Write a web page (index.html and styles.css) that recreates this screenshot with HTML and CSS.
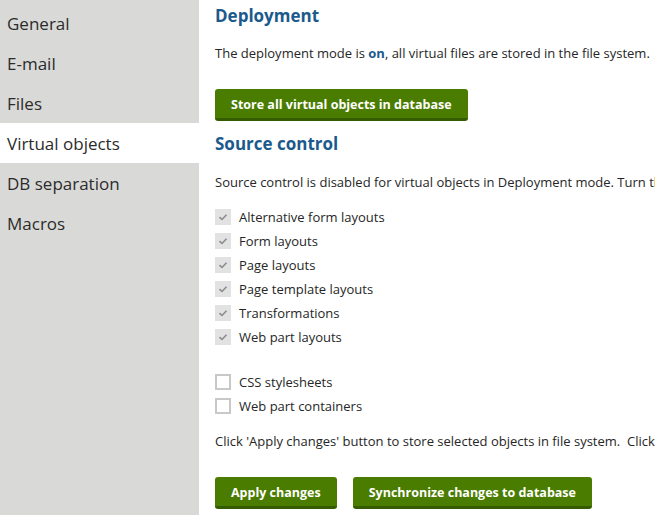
FILE: index.html
```html
<!DOCTYPE html>
<html>
<head>
<meta charset="utf-8">
<link rel="stylesheet" href="styles.css">
</head>
<body>
<div class="layout">
  <nav class="sidebar">
    <div class="nav-item">General</div>
    <div class="nav-item">E-mail</div>
    <div class="nav-item">Files</div>
    <div class="nav-item active">Virtual objects</div>
    <div class="nav-item">DB separation</div>
    <div class="nav-item">Macros</div>
  </nav>
  <main class="content">
    <h2 class="heading">Deployment</h2>
    <p class="text">The deployment mode is <b class="on">on</b>, all virtual files are stored in the file system.</p>
    <div class="btn-row first"><button class="btn">Store all virtual objects in database</button></div>
    <h2 class="heading second">Source control</h2>
    <p class="text">Source control is disabled for virtual objects in Deployment mode. Turn the deployment mode off to enable source control.</p>
    <ul class="checks">
      <li><span class="cb checked"><svg viewBox="0 0 16 16" width="16" height="16"><path d="M4.5 8.2 L7 10.5 L11.5 5.8" fill="none" stroke="#8a8a8a" stroke-width="1.6"/></svg></span>Alternative form layouts</li>
      <li><span class="cb checked"><svg viewBox="0 0 16 16" width="16" height="16"><path d="M4.5 8.2 L7 10.5 L11.5 5.8" fill="none" stroke="#8a8a8a" stroke-width="1.6"/></svg></span>Form layouts</li>
      <li><span class="cb checked"><svg viewBox="0 0 16 16" width="16" height="16"><path d="M4.5 8.2 L7 10.5 L11.5 5.8" fill="none" stroke="#8a8a8a" stroke-width="1.6"/></svg></span>Page layouts</li>
      <li><span class="cb checked"><svg viewBox="0 0 16 16" width="16" height="16"><path d="M4.5 8.2 L7 10.5 L11.5 5.8" fill="none" stroke="#8a8a8a" stroke-width="1.6"/></svg></span>Page template layouts</li>
      <li><span class="cb checked"><svg viewBox="0 0 16 16" width="16" height="16"><path d="M4.5 8.2 L7 10.5 L11.5 5.8" fill="none" stroke="#8a8a8a" stroke-width="1.6"/></svg></span>Transformations</li>
      <li><span class="cb checked"><svg viewBox="0 0 16 16" width="16" height="16"><path d="M4.5 8.2 L7 10.5 L11.5 5.8" fill="none" stroke="#8a8a8a" stroke-width="1.6"/></svg></span>Web part layouts</li>
    </ul>
    <ul class="checks second-group">
      <li><span class="cb"></span>CSS stylesheets</li>
      <li><span class="cb"></span>Web part containers</li>
    </ul>
    <p class="text note">Click 'Apply changes' button to store selected objects in file system.&nbsp; Click 'Synchronize changes to database' button to store changes in database.</p>
    <div class="btn-row last">
      <button class="btn">Apply changes</button>
      <button class="btn">Synchronize changes to database</button>
    </div>
  </main>
</div>
</body>
</html>
```
FILE: styles.css
```css
html, body {
  margin: 0;
  padding: 0;
  background: #fff;
  overflow: hidden;
}
body {
  font-family: "Open Sans", "Noto Sans", sans-serif;
  color: #262626;
  width: 655px;
  height: 515px;
}
.layout {
  display: flex;
  height: 515px;
}
.sidebar {
  width: 199px;
  flex: none;
  background: #d9dad8;
  padding-top: 3px;
}
.nav-item {
  height: 40px;
  line-height: 42px;
  overflow: hidden;
  padding-left: 7px;
  font-size: 17px;
  color: #2b2b2b;
  white-space: nowrap;
}
.nav-item.active {
  background: #fff;
}
.content {
  flex: 1;
  padding-left: 16px;
  white-space: nowrap;
  overflow: hidden;
}
.heading {
  margin: 0;
  font-size: 17px;
  font-weight: 700;
  color: #1b5a8c;
  height: 32px;
  line-height: 32px;
}
.heading.second {
  margin-top: 7px;
}
.text {
  margin: 12px 0 0 0;
  font-size: 13px;
  line-height: 18px;
  color: #262626;
}
.heading.second + .text {
  margin-top: 13px;
}
.text.note {
  margin-top: 14px;
}
.on {
  color: #1b5a8c;
}
.btn-row {
  display: flex;
  gap: 16px;
}
.btn-row.first {
  margin-top: 27px;
}
.btn-row.last {
  margin-top: 27px;
}
.btn {
  font-family: inherit;
  font-size: 12.5px;
  font-weight: 700;
  color: #fff;
  background: #4a7c00;
  border: none;
  border-bottom: 3px solid #365c00;
  border-radius: 3px;
  height: 32px;
  padding: 2px 16px 0 16px;
  line-height: 27px;
}
.checks {
  list-style: none;
  margin: 14px 0 0 0;
  padding: 0;
}
.checks.second-group {
  margin-top: 21px;
}
.checks li {
  display: flex;
  align-items: center;
  height: 24px;
  font-size: 13px;
  color: #262626;
}
.cb {
  width: 16px;
  height: 16px;
  box-sizing: border-box;
  border: 2px solid #c8c8c8;
  background: #fff;
  margin-right: 8px;
  display: inline-flex;
  align-items: center;
  justify-content: center;
  flex: none;
}
.cb.checked {
  border: none;
  background: #e2e2e2;
}
.cb svg {
  display: block;
}
```
